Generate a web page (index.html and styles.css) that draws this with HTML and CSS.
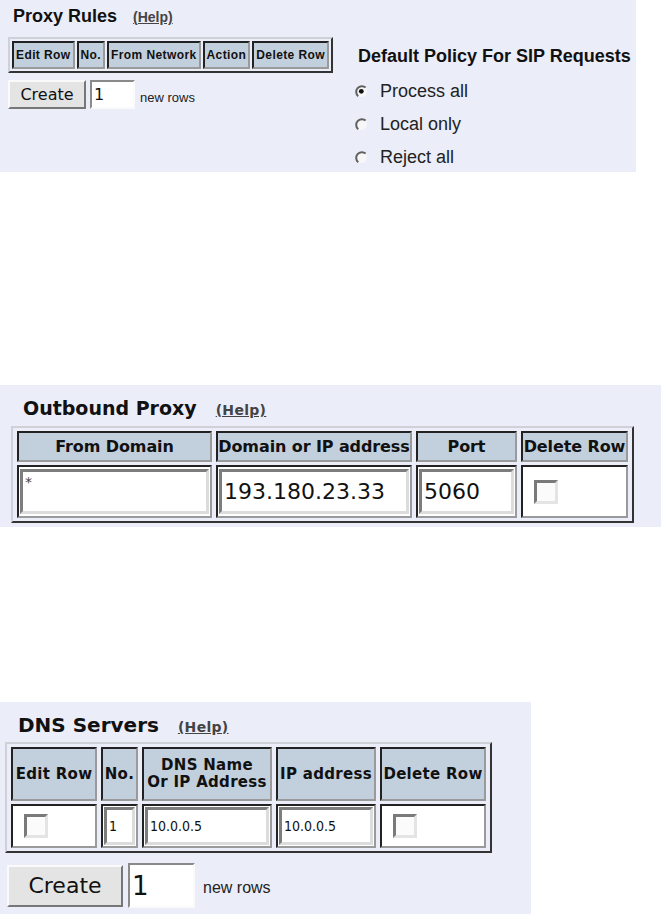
FILE: index.html
```html
<!DOCTYPE html>
<html lang="en">
<head>
  <meta charset="UTF-8" />
  <title>SIP Proxy Settings</title>
  <link rel="stylesheet" href="styles.css">
</head>
<body>

<div class="shot shot-proxy">
  <div class="rules">
    <h2 class="title">Proxy Rules<a href="#" class="help">(Help)</a></h2>
    <table class="grid grid-small">
      <tr>
        <th>Edit Row</th>
        <th>No.</th>
        <th>From Network</th>
        <th>Action</th>
        <th>Delete Row</th>
      </tr>
    </table>
    <div class="create-row">
      <button class="create">Create</button>
      <input class="rows" type="text" value="1">
      <span class="new-rows">new rows</span>
    </div>
  </div>

  <div class="policy">
    <h3>Default Policy For SIP Requests</h3>
    <div class="radios">
      <label class="radio">
        <svg width="13" height="13" viewBox="0 0 13 13"><circle cx="6.5" cy="6.5" r="5.5" fill="#f7f7f9"/><path d="M3.2 11.2 A5.4 5.4 0 0 1 10.6 2.6" stroke="#606060" stroke-width="2" fill="none"/><circle cx="6.3" cy="6.3" r="2.4" fill="#111"/></svg>
        Process all
      </label>
      <label class="radio">
        <svg width="13" height="13" viewBox="0 0 13 13"><circle cx="6.5" cy="6.5" r="5.5" fill="#f7f7f9"/><path d="M3.2 11.2 A5.4 5.4 0 0 1 10.6 2.6" stroke="#606060" stroke-width="2" fill="none"/></svg>
        Local only
      </label>
      <label class="radio">
        <svg width="13" height="13" viewBox="0 0 13 13"><circle cx="6.5" cy="6.5" r="5.5" fill="#f7f7f9"/><path d="M3.2 11.2 A5.4 5.4 0 0 1 10.6 2.6" stroke="#606060" stroke-width="2" fill="none"/></svg>
        Reject all
      </label>
    </div>
  </div>
</div>

<div class="shot shot-outbound">
  <h2 class="title title-big">Outbound Proxy<a href="#" class="help help-big">(Help)</a></h2>
  <table class="grid grid-outbound">
    <colgroup>
      <col style="width:195px"><col style="width:196px"><col style="width:101px"><col style="width:107px">
    </colgroup>
    <tr>
      <th>From Domain</th>
      <th>Domain or IP address</th>
      <th>Port</th>
      <th>Delete Row</th>
    </tr>
    <tr>
      <td><input class="field field-star" type="text" value="*"></td>
      <td><input class="field" type="text" value="193.180.23.33"></td>
      <td><input class="field" type="text" value="5060"></td>
      <td><span class="check"></span></td>
    </tr>
  </table>
</div>

<div class="shot shot-dns">
  <h2 class="title title-big title-dns">DNS Servers<a href="#" class="help help-big">(Help)</a></h2>
  <table class="grid grid-dns">
    <colgroup>
      <col style="width:86px"><col style="width:37px"><col style="width:130px"><col style="width:100px"><col style="width:106px">
    </colgroup>
    <tr>
      <th>Edit Row</th>
      <th>No.</th>
      <th>DNS Name<br>Or IP Address</th>
      <th>IP address</th>
      <th>Delete Row</th>
    </tr>
    <tr>
      <td><span class="check"></span></td>
      <td><input class="field field-small" type="text" value="1"></td>
      <td><input class="field field-small" type="text" value="10.0.0.5"></td>
      <td><input class="field field-small" type="text" value="10.0.0.5"></td>
      <td><span class="check"></span></td>
    </tr>
  </table>
  <div class="create-row create-row-big">
    <button class="create">Create</button>
    <input class="rows" type="text" value="1">
    <span class="new-rows">new rows</span>
  </div>
</div>

</body>
</html>
```

FILE: styles.css
```css
body {
  margin: 0;
  background: #fff;
  color: #111;
}
.shot {
  background: #ebedf8;
  box-sizing: border-box;
}

/* proxy rules */
.shot-proxy {
  width: 636px;
  height: 172px;
  display: flex;
}
.rules {
  width: 355px;
  padding-left: 8px;
  box-sizing: border-box;
}
.title {
  margin: 0;
  padding: 6px 0 0 5px;
  font: bold 18px/20px 'Liberation Sans', Arial, sans-serif;
  color: #111;
}
.help {
  margin-left: 16px;
  font: bold 14px 'Liberation Sans', Arial, sans-serif;
  color: #444;
}
.grid {
  border-collapse: separate;
  border: 2px solid;
  border-color: #cfd1d8 #333 #333 #cfd1d8;
}
.grid th {
  background: #c2cfdc;
  border: 2px solid;
  border-color: #222 #9a9a9a #9a9a9a #222;
  color: #111;
  white-space: nowrap;
}
.grid td {
  background: #fff;
  border: 2px solid;
  border-color: #222 #9a9a9a #9a9a9a #222;
  padding: 1px;
  vertical-align: middle;
}
.grid-small {
  margin-top: 11px;
  border-spacing: 2px;
}
.grid-small th {
  height: 24px;
  padding: 0 2px;
  font: bold 12px 'Liberation Sans', Arial, sans-serif;
  letter-spacing: 0.4px;
}
.create-row {
  display: flex;
  align-items: center;
  margin-top: 7px;
  height: 29px;
}
.create {
  width: 78px;
  height: 29px;
  padding: 0;
  background: #e4e4e4;
  border: 2px solid;
  border-color: #fafafa #777 #777 #fafafa;
  font: 16px 'DejaVu Sans', sans-serif;
  color: #111;
}
.rows {
  width: 45px;
  height: 29px;
  margin-left: 4px;
  padding: 0 2px;
  box-sizing: border-box;
  border: 2px solid;
  border-color: #8a8a8a #fafafa #fafafa #8a8a8a;
  background: #fff;
  font: 16px 'DejaVu Sans', sans-serif;
  color: #111;
}
.new-rows {
  align-self: flex-end;
  margin: 0 0 4px 5px;
  font: 13px 'Liberation Sans', Arial, sans-serif;
  color: #222;
}
.policy {
  padding-top: 46px;
}
.policy h3 {
  margin: 0 0 0 3px;
  font: bold 18px/20px 'Liberation Sans', Arial, sans-serif;
  color: #111;
}
.radios {
  margin-top: 9px;
}
.radio {
  display: flex;
  align-items: center;
  height: 33px;
  font: 18px 'Liberation Sans', Arial, sans-serif;
  color: #222;
}
.radio svg {
  margin-right: 12px;
}

/* outbound proxy */
.shot-outbound {
  margin-top: 213px;
  height: 142px;
  padding: 12px 0 0 11px;
}
.title-big {
  padding: 0 0 0 12px;
  font: bold 19px/22px 'DejaVu Sans', sans-serif;
}
.help-big {
  margin-left: 19px;
  font: bold 14px 'DejaVu Sans', sans-serif;
  letter-spacing: 0.3px;
}
.grid-outbound {
  margin-top: 7px;
  border-spacing: 4px 3px;
  table-layout: fixed;
}
.grid-outbound th {
  height: 27px;
  padding: 0;
  font: bold 16px 'DejaVu Sans', sans-serif;
  letter-spacing: -0.1px;
}
.grid-outbound td {
  height: 47px;
}
.field {
  display: block;
  width: 100%;
  height: 45px;
  box-sizing: border-box;
  padding: 0 2px;
  border: 3px solid;
  border-color: #7d7d7d #dcdcdc #dcdcdc #7d7d7d;
  background: #fff;
  font: 22px 'DejaVu Sans', sans-serif;
  color: #111;
}
.field-star {
  padding-bottom: 20px;
  font-size: 14px;
  color: #444;
}
.check {
  display: block;
  width: 24px;
  height: 24px;
  margin-left: 10px;
  box-sizing: border-box;
  border: 3px solid;
  border-color: #7a7a7a #e4e4e4 #e4e4e4 #7a7a7a;
  background: #fbfbfb;
}

/* dns servers */
.shot-dns {
  margin-top: 175px;
  width: 531px;
  height: 212px;
  padding: 12px 0 0 5px;
}
.title-dns {
  padding-left: 13px;
  font-size: 20px;
}
.grid-dns {
  margin-top: 6px;
  border-spacing: 4px 3px;
  table-layout: fixed;
}
.grid-dns th {
  height: 50px;
  padding: 0;
  font: bold 15px/17px 'DejaVu Sans', sans-serif;
  letter-spacing: 0.3px;
}
.grid-dns td {
  height: 38px;
}
.field-small {
  height: 38px;
  font: 14px 'DejaVu Sans Condensed', 'DejaVu Sans', sans-serif;
  font-stretch: condensed;
}
.create-row-big {
  margin: 10px 0 0 2px;
  height: 45px;
}
.create-row-big .create {
  width: 116px;
  height: 42px;
  font-size: 22px;
}
.create-row-big .rows {
  width: 67px;
  height: 45px;
  margin-left: 5px;
  font-size: 26px;
}
.create-row-big .new-rows {
  margin: 0 0 11px 8px;
  font-size: 16px;
}
```
